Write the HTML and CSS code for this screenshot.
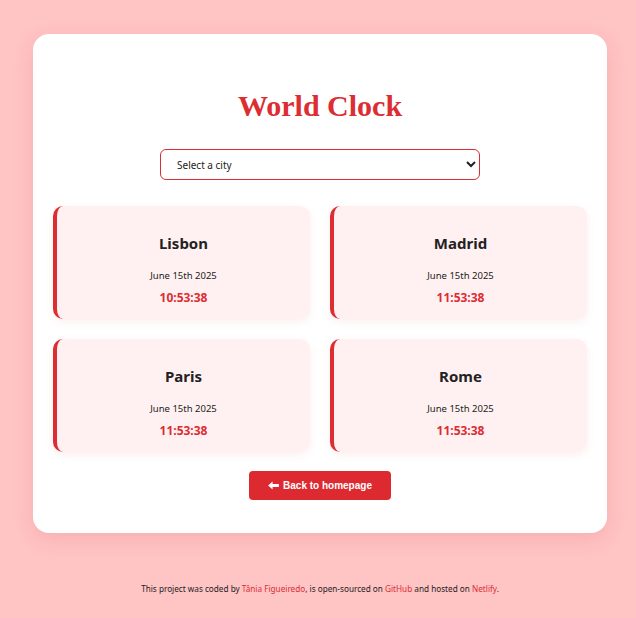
FILE: index.html
```html
<!DOCTYPE html>
<html lang="en">
<head>
<meta charset="utf-8">
<title>World Clock</title>
<link rel="stylesheet" href="styles.css">
</head>
<body>
<main class="container">
  <h1 class="title">World Clock</h1>
  <div class="select-wrap">
    <select class="city-select">
      <option>Select a city</option>
    </select>
  </div>
  <div class="cities">
    <div class="city">
      <h2 class="city-name">Lisbon</h2>
      <div class="date">June 15th 2025</div>
      <div class="time">10:53:38</div>
    </div>
    <div class="city">
      <h2 class="city-name">Madrid</h2>
      <div class="date">June 15th 2025</div>
      <div class="time">11:53:38</div>
    </div>
    <div class="city">
      <h2 class="city-name">Paris</h2>
      <div class="date">June 15th 2025</div>
      <div class="time">11:53:38</div>
    </div>
    <div class="city">
      <h2 class="city-name">Rome</h2>
      <div class="date">June 15th 2025</div>
      <div class="time">11:53:38</div>
    </div>
  </div>
  <div class="actions">
    <a class="back-btn" href="#"><svg class="arrow" viewBox="0 0 12 10" width="11" height="9"><path d="M0 5 L5 0.5 V3.2 H12 V6.8 H5 V9.5 Z" fill="#fff"/></svg>Back to homepage</a>
  </div>
</main>
<footer class="footer">This project was coded by <a href="#">Tânia Figueiredo</a>, is open-sourced on <a href="#">GitHub</a> and hosted on <a href="#">Netlify</a>.</footer>
</body>
</html>
```
FILE: styles.css
```css
* { box-sizing: border-box; }
body {
  margin: 0;
  background: #ffc4c4;
  font-family: "Noto Sans", "Open Sans", sans-serif;
  color: #222;
  padding: 34px 29px 0 33px;
}
.container {
  background: #fff;
  border-radius: 16px;
  width: 574px;
  padding: 52px 20px 33px;
  box-shadow: 0 6px 20px rgba(200, 60, 60, 0.15);
}
.title {
  margin: 0;
  text-align: center;
  font-family: "Liberation Serif", "DejaVu Serif", serif;
  font-weight: bold;
  font-size: 30px;
  line-height: 36px;
  padding-top: 2px;
  height: 38px;
  color: #dc2d33;
}
.select-wrap {
  display: flex;
  justify-content: center;
  margin-top: 25px;
}
.city-select {
  width: 320px;
  height: 31px;
  border: 1px solid #dc2d33;
  border-radius: 6px;
  background: #fff;
  font-family: "Noto Sans", sans-serif;
  font-size: 10px;
  padding: 0 12px;
  color: #222;
}
.cities {
  display: grid;
  grid-template-columns: 1fr 1fr;
  gap: 20px;
  margin-top: 26px;
}
.city {
  height: 113px;
  background: #fff1f1;
  border-left: 4px solid #dc2d33;
  border-radius: 10px;
  box-shadow: 0 3px 8px rgba(220, 45, 51, 0.08);
  display: flex;
  flex-direction: column;
  align-items: center;
  padding-top: 27px;
}
.city-name {
  margin: 0;
  font-size: 15px;
  line-height: 20px;
  font-weight: bold;
  color: #222;
}
.date {
  margin-top: 16px;
  font-size: 9.5px;
  line-height: 14px;
}
.time {
  margin-top: 7px;
  font-size: 12px;
  line-height: 16px;
  font-weight: bold;
  color: #dc2d33;
}
.actions {
  display: flex;
  justify-content: center;
  margin-top: 19px;
}
.back-btn {
  display: inline-flex;
  align-items: center;
  justify-content: center;
  gap: 4px;
  width: 142px;
  height: 29px;
  background: #dc2a30;
  color: #fff;
  border-radius: 4px;
  font-family: "Liberation Sans", Arial, sans-serif;
  font-weight: bold;
  font-size: 10px;
  text-decoration: none;
}
.footer {
  text-align: center;
  font-size: 8.2px;
  margin-top: 50px;
  color: #222;
}
.footer a {
  color: #dc2d33;
  text-decoration: none;
}
```
